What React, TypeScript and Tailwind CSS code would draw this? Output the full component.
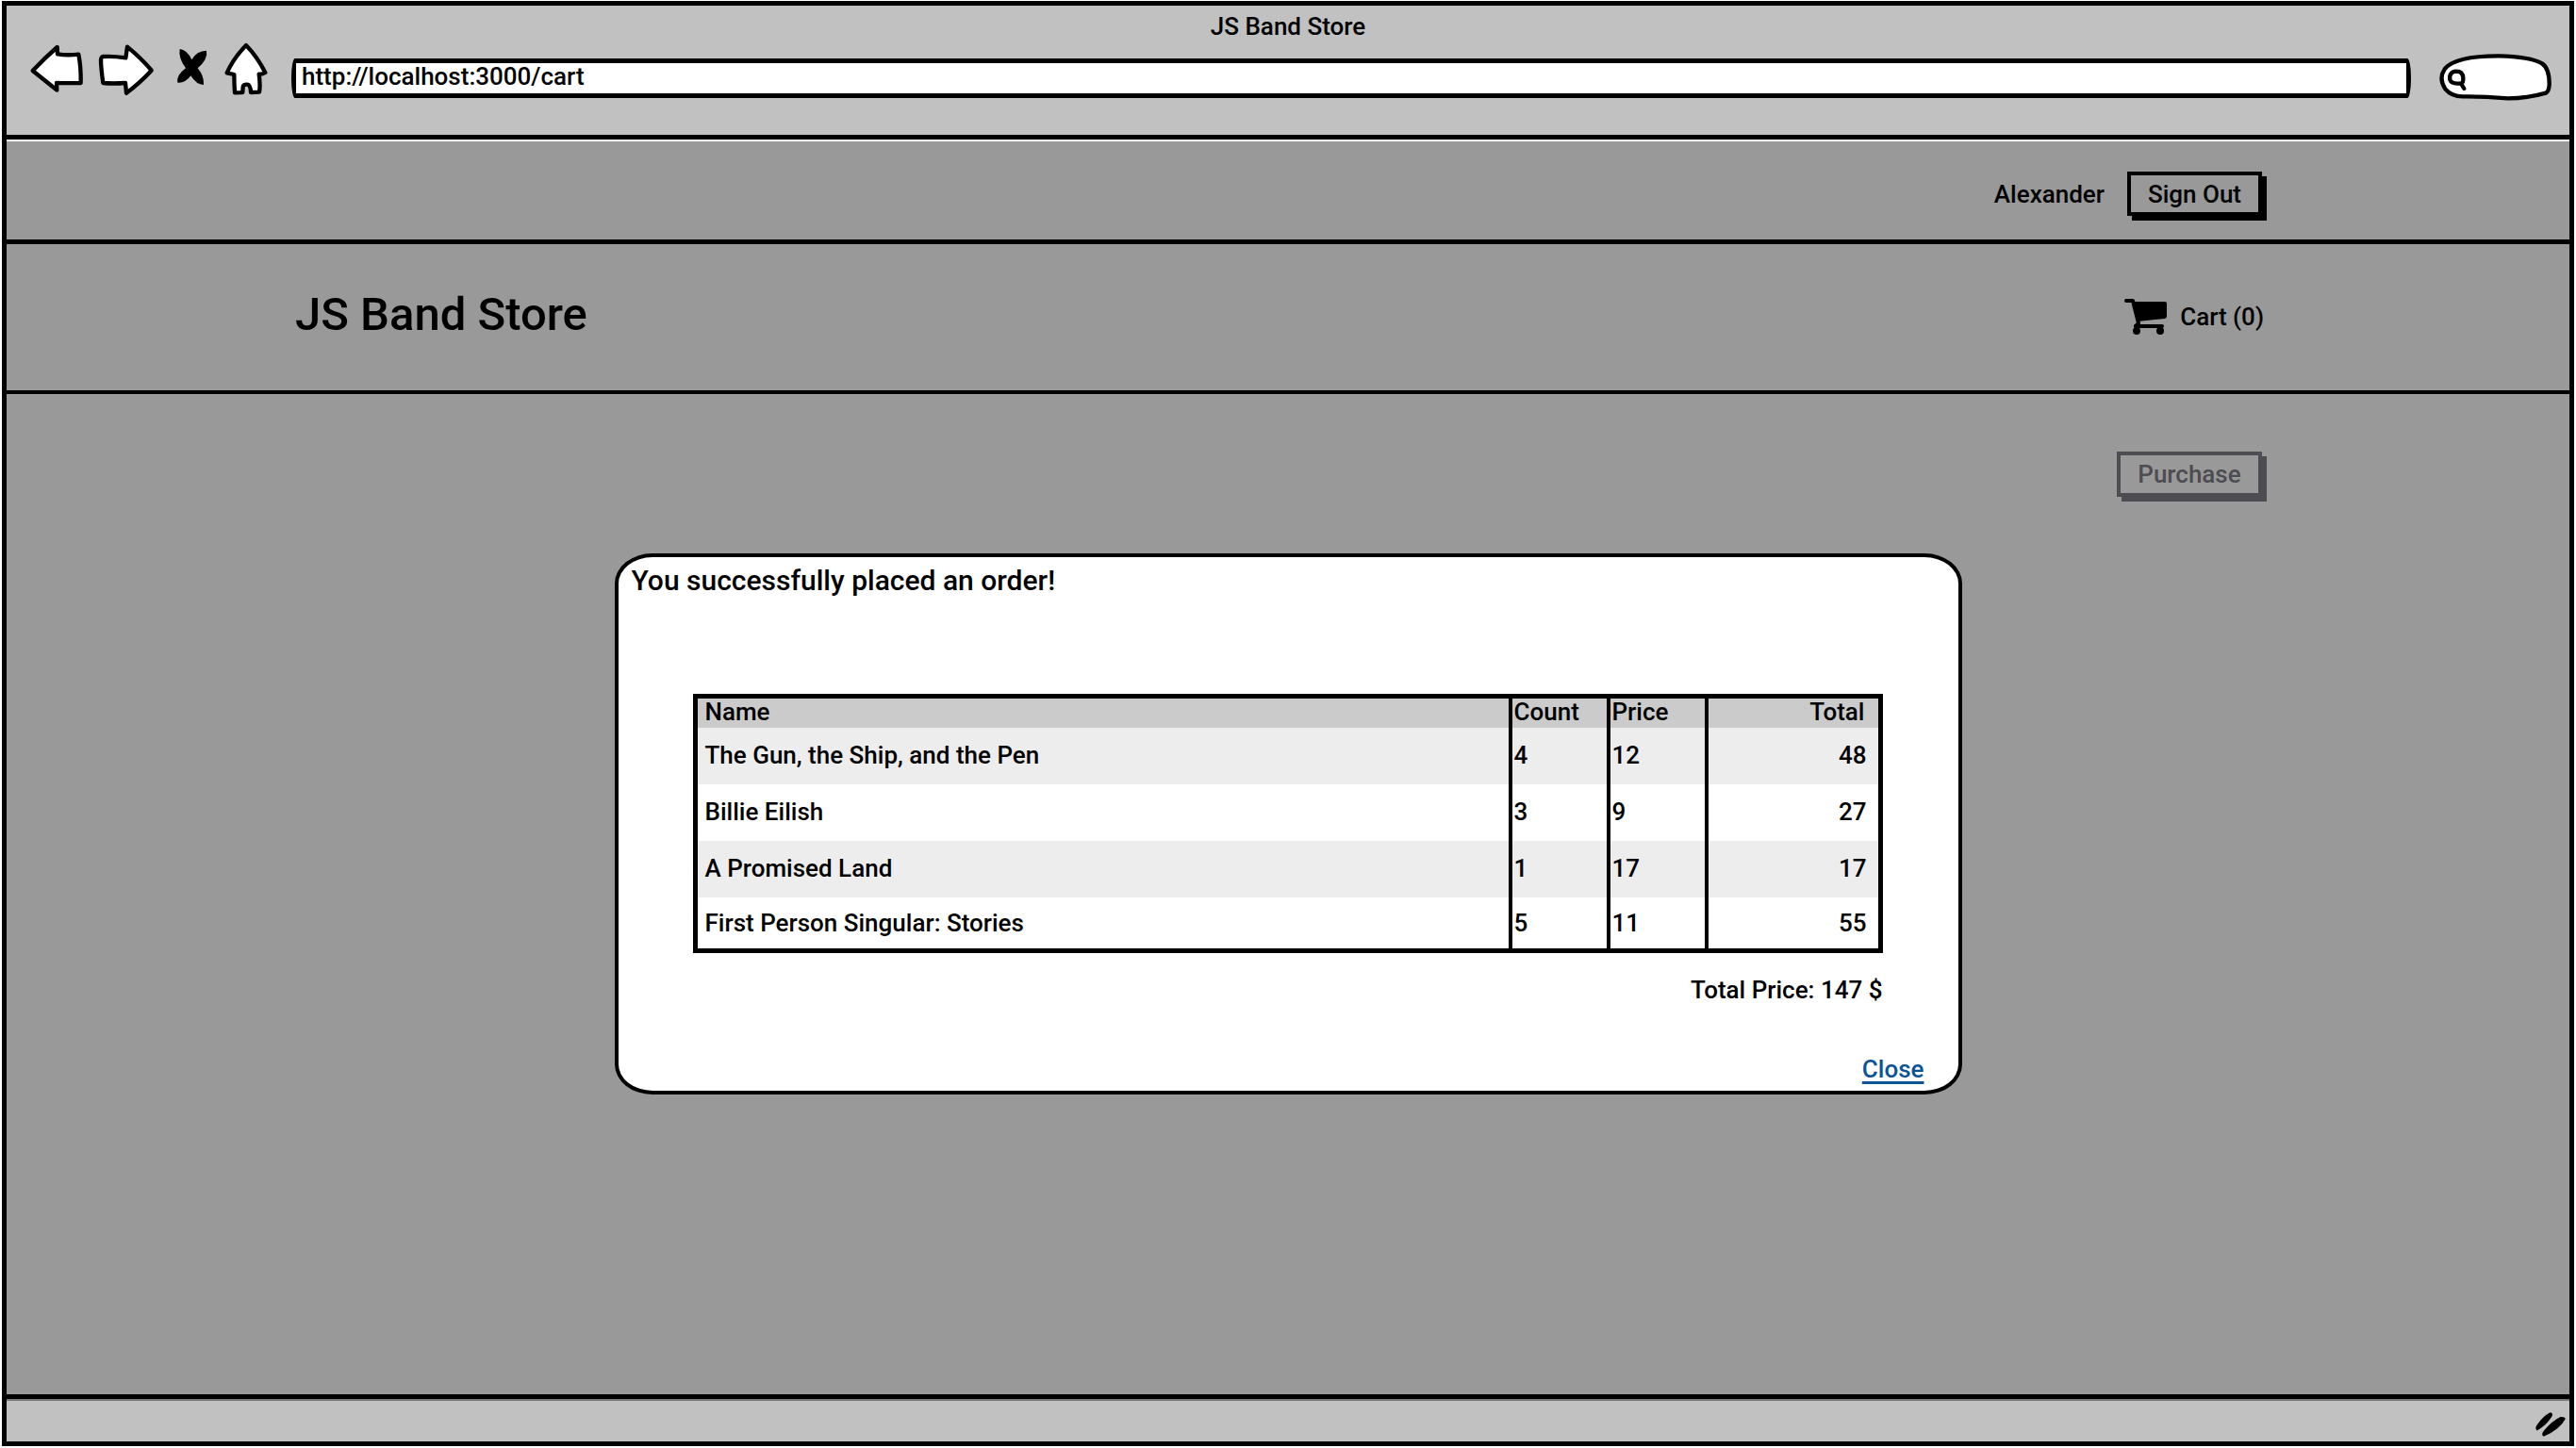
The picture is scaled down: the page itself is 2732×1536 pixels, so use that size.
import type { ReactNode } from "react";

type Item = { name: string; count: number; price: number; total: number };

const items: Item[] = [
  { name: "The Gun, the Ship, and the Pen", count: 4, price: 12, total: 48 },
  { name: "Billie Eilish", count: 3, price: 9, total: 27 },
  { name: "A Promised Land", count: 1, price: 17, total: 17 },
  { name: "First Person Singular: Stories", count: 5, price: 11, total: 55 },
];

const outline = {
  fill: "white",
  stroke: "black",
  strokeWidth: 13,
  strokeLinejoin: "round" as const,
};

function BackIcon() {
  return (
    <svg className="h-[57px] w-[60px]" viewBox="30 15 180 171" aria-hidden="true">
      <path
        {...outline}
        d="M41 105 Q80 64 119 30 L120 52 Q150 57 187 53 Q195 95 194 144 Q150 145 117 144 L118 167 Q85 140 41 105Z"
      />
    </svg>
  );
}

function ForwardIcon() {
  return (
    <svg className="h-[57px] w-[62px]" viewBox="250 15 186 171" aria-hidden="true">
      <path
        {...outline}
        d="M268 60 Q300 58 341 64 L346 29 Q390 65 423 104 Q385 145 343 176 L340 144 Q300 147 269 144 Q262 95 262 70 Q263 61 268 60Z"
      />
    </svg>
  );
}

function StopIcon() {
  return (
    <svg className="h-[57px] w-[37px]" viewBox="495 15 111 171" aria-hidden="true">
      <path d="M512 36 Q535 38 550 70 Q565 42 597 41 Q603 67 569 97 Q590 123 588 150 Q565 150 547 121 Q530 145 505 143 Q500 120 531 97 Q507 65 512 36Z" />
    </svg>
  );
}

function HomeIcon() {
  return (
    <svg className="h-[57px] w-[49px]" viewBox="645 15 147 171" aria-hidden="true">
      <path
        {...outline}
        d="M720 24 Q755 60 781 111 Q772 117 761 116 Q766 150 762 173 L735 174 Q734 150 724 149 Q712 148 710 156 L709 174 L684 175 Q682 145 682 117 L659 112 Q680 65 720 24Z"
      />
    </svg>
  );
}

function CartIcon() {
  return (
    <svg className="h-[38px] w-[45px]" viewBox="0 0 45 38" aria-hidden="true">
      <path d="M2 2H9L15 26L12 29" fill="none" stroke="black" strokeWidth="4" strokeLinecap="round" strokeLinejoin="round" />
      <path d="M8 3H43Q45 3 45 5V19Q45 20 43 21L14 24Z" />
      <path d="M12 29H40" stroke="black" strokeWidth="4" strokeLinecap="round" />
      <circle cx="13" cy="34" r="4" />
      <circle cx="38" cy="34" r="4" />
    </svg>
  );
}

function ResizeGrip() {
  return (
    <svg className="h-[28px] w-[35px]" viewBox="620 170 105 85" aria-hidden="true">
      <path d="M673 174 Q683 176 679 186 Q660 217 630 232 Q622 225 632 212 Q650 186 673 174Z" />
      <path d="M706 188 Q720 187 722 194 Q705 228 652 251 Q642 246 653 232 Q680 200 706 188Z" />
    </svg>
  );
}

function NavButton({ label, children }: { label: string; children: ReactNode }) {
  return (
    <button type="button" aria-label={label} className="block shrink-0">
      {children}
    </button>
  );
}

function BrowserBar() {
  return (
    <header className="border-b-5 border-black bg-[#c1c1c1] pt-[5px] pb-[34px]">
      <div className="text-center leading-[34px]">JS Band Store</div>
      <nav className="flex items-start pr-4 pl-6">
        <div className="flex">
          <NavButton label="Back"><BackIcon /></NavButton>
          <div className="pl-3"><NavButton label="Forward"><ForwardIcon /></NavButton></div>
          <div className="pl-5"><NavButton label="Stop"><StopIcon /></NavButton></div>
          <div className="pl-3.5"><NavButton label="Home"><HomeIcon /></NavButton></div>
        </div>
        <input
          aria-label="Address"
          defaultValue="http://localhost:3000/cart"
          className="mt-[17px] ml-6 h-[42px] min-w-0 flex-1 rounded-[4px/20px] border-5 border-black bg-white px-1.5 pb-1 outline-none"
        />
        <div className="relative mt-2.5 ml-7 h-[54px] w-[124px] shrink-0">
          <svg className="absolute inset-0 size-full" viewBox="75 45 372 162" aria-hidden="true">
            <path
              {...outline}
              d="M155 187 Q120 187 100 163 Q78 130 98 100 Q130 58 270 58 Q370 60 408 82 Q432 98 431 150 Q430 170 420 176 Q360 193 300 193 Q220 186 155 187Z"
            />
            <path {...outline} d="M135 107 Q156 107 157 128 Q158 145 150 145 Q120 149 115 134 Q111 109 135 107Z" />
            <path {...outline} strokeLinecap="round" d="M151 147 L160 162" />
          </svg>
          <input
            type="search"
            aria-label="Search"
            className="relative h-full w-full bg-transparent pr-4 pl-9 outline-none"
          />
        </div>
      </nav>
    </header>
  );
}

function StoreHeader() {
  return (
    <>
      <div className="flex items-center justify-end gap-6 border-t-2 border-b-5 border-t-white border-b-black pt-8 pr-[326px] pb-[25px]">
        <span>Alexander</span>
        <button
          type="button"
          className="h-[47px] w-[143px] border-4 border-black leading-[34px] shadow-[5px_5px_0_black]"
        >
          Sign Out
        </button>
      </div>
      <div className="flex items-center justify-between border-b-4 border-black pt-[45px] pr-[324px] pb-[50px] pl-[306px]">
        <h1 className="text-[49px] leading-[60px]">JS Band Store</h1>
        <a href="#cart" className="flex items-center gap-3.5 pt-1">
          <CartIcon />
          <span>Cart (0)</span>
        </a>
      </div>
    </>
  );
}

function OrderTable() {
  const divider = "border-l-4 border-black pl-0.5";
  return (
    <div className="border-5 border-black">
      <table className="w-full table-fixed border-separate border-spacing-0 text-left">
        <colgroup>
          <col />
          <col className="w-[104px]" />
          <col className="w-[104px]" />
          <col className="w-[184px]" />
        </colgroup>
        <thead className="bg-[#cbcbcb]">
          <tr className="h-[31px] leading-[29px]">
            <th className="p-0 pb-0.5 pl-2 font-medium">Name</th>
            <th className={`p-0 pb-0.5 font-medium ${divider}`}>Count</th>
            <th className={`p-0 pb-0.5 font-medium ${divider}`}>Price</th>
            <th className={`p-0 pr-3.5 pb-0.5 text-right font-medium ${divider}`}>Total</th>
          </tr>
        </thead>
        <tbody>
          {items.map((item) => (
            <tr key={item.name} className="h-[60px] align-top leading-[58px] odd:bg-[#ededed] last:h-[54px] last:leading-[54px]">
              <td className="py-0 pl-2">{item.name}</td>
              <td className={`py-0 ${divider}`}>{item.count}</td>
              <td className={`py-0 ${divider}`}>{item.price}</td>
              <td className={`py-0 pr-3 text-right ${divider}`}>{item.total}</td>
            </tr>
          ))}
        </tbody>
      </table>
    </div>
  );
}

function OrderDialog() {
  return (
    <section
      role="dialog"
      aria-labelledby="order-title"
      className="mx-auto mt-[60px] w-full max-w-[1429px] rounded-[40px/32px] border-4 border-black bg-white pt-[7px] pb-1.5"
    >
      <h2 id="order-title" className="pl-3.5 text-[30px] leading-[36px]">
        You successfully placed an order!
      </h2>
      <div className="pt-[102px] pr-20 pl-[79px]">
        <OrderTable />
        <p className="pt-[22px] text-right leading-[34px]">Total Price: 147 $</p>
      </div>
      <div className="flex justify-end pt-[50px] pr-9">
        <a href="#close" className="text-[#0b5597] underline decoration-3 underline-offset-4 leading-[34px]">
          Close
        </a>
      </div>
    </section>
  );
}

export default function App() {
  return (
    <div className="flex min-h-screen flex-col bg-white px-0.5 pt-px pb-0.5 font-['Roboto',sans-serif] text-[26px] leading-[34px] font-medium text-black">
      <div className="flex flex-1 flex-col border-5 border-black bg-[#999999]">
        <BrowserBar />
        <StoreHeader />
        <main className="flex-1 pt-[61px]">
          <div className="flex justify-end pr-[326px]">
            <button
              type="button"
              disabled
              className="h-[48px] w-[154px] border-4 border-[#4c4c52] leading-[34px] text-[#4c4c52] shadow-[5px_5px_0_#4c4c52]"
            >
              Purchase
            </button>
          </div>
          <OrderDialog />
        </main>
        <footer className="border-t-5 border-black bg-[#c1c1c1]">
          <div className="flex justify-end border-t-2 border-[#777777] pt-[11px] pr-[3px] pb-1">
            <ResizeGrip />
          </div>
        </footer>
      </div>
    </div>
  );
}
